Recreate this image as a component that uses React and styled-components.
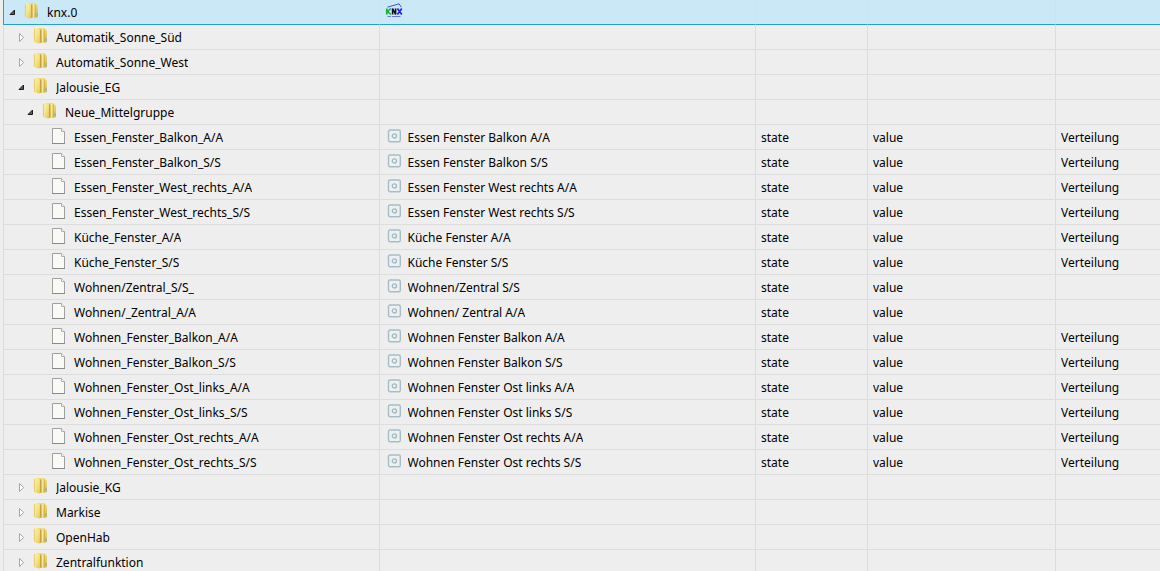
import { useState } from 'react';
import styled, { createGlobalStyle } from 'styled-components';

const GlobalStyle = createGlobalStyle`
  body {
    margin: 0;
    background-color: #eeeeee;
    color: #000000;
    font-family: "Noto Sans", "Open Sans", sans-serif;
    font-size: 12px;
  }
`;

const Pane = styled.main`
  box-sizing: border-box;
  height: 100vh;
  padding-left: 3px;
  overflow-y: auto;
  scrollbar-width: none;
`;

const Table = styled.table`
  width: 100%;
  table-layout: fixed;
  border-collapse: separate;
  border-spacing: 0;
`;

const Col = styled.col`
  width: ${props => props.$width || 'auto'};
`;

const Cell = styled.td`
  box-sizing: border-box;
  height: 25px;
  padding: 0 0 0 5px;
  border-right: 1px solid #dddddd;
  border-bottom: 1px solid #dddddd;
  overflow: hidden;

  &:first-child {
    padding-left: ${props => 4 + (props.$level || 0) * 9}px;
    border-left: 1px solid #dddddd;
  }

  &:last-child {
    border-right: none;
  }
`;

const Row = styled.tr`
  background-color: ${props => (props.$selected ? '#cbe8f6' : 'transparent')};

  & > ${Cell} {
    border-bottom-color: ${props => (props.$selected ? '#26a0da' : '#dddddd')};
  }

  & > ${Cell}:first-child {
    border-left-color: ${props => (props.$selected ? '#26a0da' : '#dddddd')};
  }
`;

const Content = styled.div`
  display: flex;
  align-items: center;
  height: 24px;
`;

const Expander = styled.button`
  display: flex;
  flex: none;
  width: 16px;
  height: 24px;
  padding: 0;
  border: none;
  background: none;
  cursor: pointer;
`;

const ExpanderSpace = styled.span`
  flex: none;
  width: 16px;
`;

const Icon = styled.svg`
  display: block;
  flex: none;
  width: ${props => props.$width || 16}px;
  height: ${props => props.$height || 16}px;
`;

const IconBox = styled.span`
  display: flex;
  flex: none;
  justify-content: center;
  width: ${props => props.$width}px;
  margin-right: ${props => props.$gap}px;
  padding-bottom: 2px;
`;

const Label = styled.span`
  display: block;
  padding-top: 2px;
  line-height: 22px;
  white-space: nowrap;
  overflow: hidden;
  text-overflow: ellipsis;
`;

const Arrow = ({ open }) => (
    <Icon $height={24} viewBox="0 0 16 24" aria-hidden="true">
        {open
            ? <path d="M6.5 10V14.5H2Z" fill="#595959" stroke="#1c1c1c" />
            : <path d="M2.5 8.5V16.5L6.7 12.5Z" fill="#ffffff" stroke="#a6a6a6" />}
    </Icon>
)

const Folder = () => (
    <Icon viewBox="0 0 16 16" aria-hidden="true">
        <defs>
            <linearGradient id="folderFront" x1="0" y1="0" x2="1" y2="1">
                <stop offset="0" stopColor="#fbf2b0" />
                <stop offset="0.5" stopColor="#f5e38a" />
                <stop offset="1" stopColor="#e2c556" />
            </linearGradient>
            <linearGradient id="folderBack" x1="0" y1="0" x2="0" y2="1">
                <stop offset="0" stopColor="#efdc80" />
                <stop offset="1" stopColor="#d9b84a" />
            </linearGradient>
        </defs>
        <path d="M5 0H11Q12 0 12.3 1L14 3V13.5Q14 14.5 13 14.5H5Z" fill="url(#folderBack)" />
        <path d="M9.4 1V14.5" stroke="#f7ea9d" strokeWidth="1.6" />
        <path d="M11.5 1.5V14.5" stroke="#d3b145" strokeWidth="0.8" />
        <path d="M7.7 1.5V14.8" stroke="#c7a23e" strokeWidth="1.4" />
        <path d="M1 1Q1 0 2 0H4.5Q5 0 5.3 0.6L7 2.4V15.6L5.5 15.2L2 14.4Q1 14.2 1 13.2Z" fill="url(#folderFront)" />
        <path d="M1.4 1V13.4" stroke="#dfc565" strokeWidth="0.8" />
        <path d="M13 10V13" stroke="#70bdd0" strokeWidth="1.3" />
    </Icon>
)

const Page = () => (
    <Icon viewBox="0 0 16 16" aria-hidden="true">
        <path d="M1.5 0.5H10.5L13.5 3.5V15.5H1.5Z" fill="#f9faf6" stroke="#a0a0a0" />
        <path d="M10.5 0.5V3.5H13.5" fill="#ffffff" stroke="#b0b0b0" />
        <path d="M1 15.5H14" stroke="#8a8a8a" />
    </Icon>
)

const StateIcon = () => (
    <Icon $width={14} $height={14} viewBox="0 0 14 14" aria-hidden="true">
        <rect x="1.5" y="1" width="11.8" height="11.8" rx="1.5" fill="#ecf0f1" stroke="#a6bdc6" strokeWidth="1.4" />
        <circle cx="7.4" cy="6.9" r="2.1" fill="none" stroke="#9fb8c1" strokeWidth="1.3" />
    </Icon>
)

const KnxLogo = () => (
    <Icon $width={18} viewBox="0 0 18 16" role="img" aria-label="KNX">
        <path d="M2.5 4.2L14 0.8L16.3 4.2" fill="none" stroke="#4050e4" />
        <path d="M1.8 5.5V11.5M5.8 5.5L2.6 8.5L5.8 11.5" fill="none" stroke="#14b038" strokeWidth="1.7" />
        <path d="M7.6 11.5V5.5L10.6 11.5V5.5" fill="none" stroke="#10102a" strokeWidth="1.6" />
        <path d="M12.4 5.5L16.8 11.5M16.8 5.5L12.4 11.5" fill="none" stroke="#2222e0" strokeWidth="1.7" />
        <path d="M2.5 13.5H6M7 13.5H15.5" stroke="#6a78e4" />
    </Icon>
)

const state = (id, name, room = 'Verteilung') => ({ id, name, type: 'state', role: 'value', room });

const tree = {
    id: 'knx.0',
    logo: true,
    children: [
        { id: 'Automatik_Sonne_Süd', children: [] },
        { id: 'Automatik_Sonne_West', children: [] },
        {
            id: 'Jalousie_EG',
            children: [
                {
                    id: 'Neue_Mittelgruppe',
                    children: [
                        state('Essen_Fenster_Balkon_A/A', 'Essen Fenster Balkon A/A'),
                        state('Essen_Fenster_Balkon_S/S', 'Essen Fenster Balkon S/S'),
                        state('Essen_Fenster_West_rechts_A/A', 'Essen Fenster West rechts A/A'),
                        state('Essen_Fenster_West_rechts_S/S', 'Essen Fenster West rechts S/S'),
                        state('Küche_Fenster_A/A', 'Küche Fenster A/A'),
                        state('Küche_Fenster_S/S', 'Küche Fenster S/S'),
                        state('Wohnen/Zentral_S/S_', 'Wohnen/Zentral S/S', ''),
                        state('Wohnen/_Zentral_A/A', 'Wohnen/ Zentral A/A', ''),
                        state('Wohnen_Fenster_Balkon_A/A', 'Wohnen Fenster Balkon A/A'),
                        state('Wohnen_Fenster_Balkon_S/S', 'Wohnen Fenster Balkon S/S'),
                        state('Wohnen_Fenster_Ost_links_A/A', 'Wohnen Fenster Ost links A/A'),
                        state('Wohnen_Fenster_Ost_links_S/S', 'Wohnen Fenster Ost links S/S'),
                        state('Wohnen_Fenster_Ost_rechts_A/A', 'Wohnen Fenster Ost rechts A/A'),
                        state('Wohnen_Fenster_Ost_rechts_S/S', 'Wohnen Fenster Ost rechts S/S'),
                    ],
                },
            ],
        },
        { id: 'Jalousie_KG', children: [] },
        { id: 'Markise', children: [] },
        { id: 'OpenHab', children: [] },
        { id: 'Zentralfunktion', children: [] },
    ],
};

const flatten = (node, open, level = 0) => [
    { ...node, level },
    ...(node.children && open.includes(node.id)
        ? node.children.flatMap(child => flatten(child, open, level + 1))
        : []),
];

const ObjectRow = ({ node, open, selected, toggle, select }) => (
    <Row $selected={selected} onClick={select}>
        <Cell $level={node.level}>
            <Content>
                {node.children
                    ? (
                        <Expander type="button" aria-label={node.id} aria-expanded={open} onClick={toggle}>
                            <Arrow open={open} />
                        </Expander>
                    )
                    : <ExpanderSpace />}
                <IconBox $width={16} $gap={7}>{node.children ? <Folder /> : <Page />}</IconBox>
                <Label>{node.id}</Label>
            </Content>
        </Cell>
        <Cell>
            <Content>
                {node.logo && <IconBox $width={18} $gap={5}><KnxLogo /></IconBox>}
                {node.name && <IconBox $width={18} $gap={5}><StateIcon /></IconBox>}
                <Label>{node.name}</Label>
            </Content>
        </Cell>
        <Cell><Label>{node.type}</Label></Cell>
        <Cell><Label>{node.role}</Label></Cell>
        <Cell><Label>{node.room}</Label></Cell>
    </Row>
)

const App = () => {
    const [open, setOpen] = useState(['knx.0', 'Jalousie_EG', 'Neue_Mittelgruppe']);
    const [selected, setSelected] = useState('knx.0');

    const toggle = (id) => {
        setOpen(open.includes(id) ? open.filter(item => item !== id) : [...open, id]);
    }

    return (
        <>
            <GlobalStyle />
            <Pane>
                <Table>
                    <colgroup>
                        <Col />
                        <Col />
                        <Col $width="112px" />
                        <Col $width="188px" />
                        <Col $width="104px" />
                    </colgroup>
                    <tbody>
                        {flatten(tree, open).map(node => (
                            <ObjectRow
                                key={node.id}
                                node={node}
                                open={open.includes(node.id)}
                                selected={selected === node.id}
                                toggle={() => toggle(node.id)}
                                select={() => setSelected(node.id)}
                            />
                        ))}
                    </tbody>
                </Table>
            </Pane>
        </>
    )
}

export default App;
